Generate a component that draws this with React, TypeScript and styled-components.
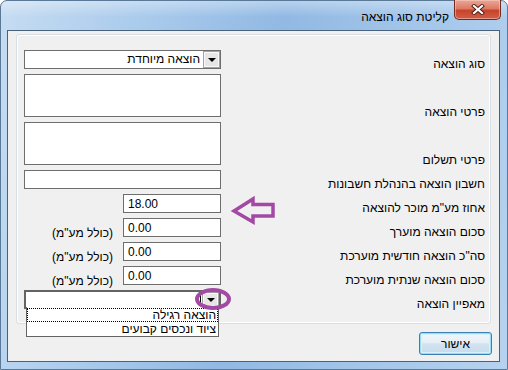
import React from "react";
import styled, { createGlobalStyle } from "styled-components";

const GlobalStyle = createGlobalStyle`
  html, body {
    margin: 0;
    padding: 0;
    background: #ffffff;
  }
  body {
    font-family: "Liberation Sans", "DejaVu Sans", Arial, sans-serif;
  }
`;

const FONT = `"Liberation Sans", "DejaVu Sans", Arial, sans-serif`;

const Window = styled.div`
  position: relative;
  box-sizing: border-box;
  width: 508px;
  height: 370px;
  display: flex;
  flex-direction: column;
  padding: 0 7px 7px 6px;
  border: 1px solid #5a7897;
  border-radius: 7px 7px 0 0;
  background:
    linear-gradient(180deg, rgba(255, 255, 255, 0.35) 0px, rgba(255, 255, 255, 0) 16px),
    linear-gradient(100deg, #c6dcf2 0%, #aacbec 25%, #91b9e3 50%, #a4c6ea 75%, #b6d2ef 100%);
  direction: rtl;
`;

const TitleBar = styled.div`
  height: 29px;
  display: flex;
  flex-direction: row;
  align-items: flex-start;
`;

const CloseButton = styled.div`
  box-sizing: border-box;
  width: 47px;
  height: 20px;
  margin-right: -1px;
  margin-top: -1px;
  display: flex;
  align-items: center;
  justify-content: center;
  border: 1px solid #6f2c22;
  border-top: none;
  border-radius: 0 0 5px 5px;
  background: linear-gradient(180deg, #e9a899 0%, #dd7a63 45%, #c8432b 55%, #d05f45 100%);
  box-shadow: inset 0 0 0 1px rgba(255, 210, 200, 0.5);
`;

const Title = styled.div`
  margin-right: 5px;
  margin-top: 9px;
  font-family: ${FONT};
  font-size: 12px;
  line-height: 14px;
  color: #000;
`;

const Client = styled.div`
  flex: 1;
  box-sizing: border-box;
  display: flex;
  flex-direction: column;
  padding: 3px 8px 6px 8px;
  background: #f0f0f0;
  border: 1px solid #48617c;
`;

const Panel = styled.div`
  position: relative;
  box-sizing: border-box;
  height: 290px;
  padding: 15px 5px 14px 7px;
  border: 1px solid #d5dfe5;
  border-radius: 3px;
  box-shadow: inset 0 0 0 1px #ffffff;
  display: grid;
  grid-template-columns: 1fr 197px;
  grid-template-rows: 19px 43px 43px 19px 19px 19px 19px 19px 19px;
  column-gap: 8px;
  row-gap: 5px;
`;

const Label = styled.div`
  align-self: end;
  margin-bottom: -2px;
  font-family: ${FONT};
  font-size: 12px;
  line-height: 14px;
  color: #000;
  white-space: nowrap;
  text-align: right;
`;

const FieldCell = styled.div`
  position: relative;
  display: flex;
  flex-direction: row;
  align-items: stretch;
`;

const TextBox = styled.input<{ $narrow?: boolean }>`
  box-sizing: border-box;
  width: ${(p) => (p.$narrow ? "98px" : "100%")};
  height: 100%;
  margin: 0;
  padding: 0 4px;
  border: 1px solid #6e6e6e;
  background: #fff;
  font-family: ${FONT};
  font-size: 12px;
  color: #000;
  direction: ltr;
  text-align: left;
  outline: none;
`;

const TextArea = styled.textarea`
  box-sizing: border-box;
  width: 100%;
  height: 100%;
  margin: 0;
  padding: 2px 4px;
  border: 1px solid #6e6e6e;
  background: #fff;
  resize: none;
  outline: none;
  font-family: ${FONT};
  font-size: 12px;
`;

const Suffix = styled.div`
  align-self: end;
  margin-right: 10px;
  margin-bottom: -3px;
  font-family: ${FONT};
  font-size: 12px;
  line-height: 14px;
  color: #000;
  white-space: nowrap;
`;

const Combo = styled.div<{ $focused?: boolean }>`
  position: relative;
  box-sizing: border-box;
  width: 100%;
  height: 100%;
  display: flex;
  flex-direction: row;
  align-items: stretch;
  background: #fff;
  border: ${(p) => (p.$focused ? "2px solid #646464" : "1px solid #6e6e6e")};
`;

const ComboButton = styled.div`
  box-sizing: border-box;
  width: 17px;
  display: flex;
  align-items: center;
  justify-content: center;
  background: #e6e6e6;
  border: 1px solid #a3a3a3;
  box-shadow: inset 0 0 0 1px #f8f8f8;
`;

const Triangle = styled.div`
  width: 0;
  height: 0;
  border-left: 4px solid transparent;
  border-right: 4px solid transparent;
  border-top: 4px solid #000;
`;

const ComboText = styled.div`
  flex: 1;
  padding-right: 3px;
  font-family: ${FONT};
  font-size: 12px;
  line-height: 17px;
  color: #000;
  text-align: right;
  white-space: nowrap;
`;

const Caret = styled.div`
  width: 1px;
  height: 11px;
  align-self: center;
  margin-right: 1px;
  background: #000;
`;

const DropList = styled.div`
  position: absolute;
  top: 100%;
  left: 0;
  right: 0;
  z-index: 2;
  box-sizing: border-box;
  border: 1px solid #646464;
  border-top: none;
  background: #fff;
  padding-top: 1px;
`;

const DropItem = styled.div<{ $focus?: boolean }>`
  box-sizing: border-box;
  height: 14px;
  padding-right: 1px;
  font-family: ${FONT};
  font-size: 12px;
  line-height: 12px;
  color: #000;
  text-align: right;
  white-space: nowrap;
  border: 1px ${(p) => (p.$focus ? "dotted #000" : "solid transparent")};
`;

const ButtonRow = styled.div`
  display: flex;
  flex-direction: row;
  margin-top: 8px;
`;

const OkButton = styled.div`
  box-sizing: border-box;
  width: 73px;
  height: 23px;
  margin-right: -1px;
  display: flex;
  align-items: center;
  justify-content: center;
  border: 1px solid #3c7fb1;
  border-radius: 3px;
  background: linear-gradient(180deg, #f0f6fa 0%, #e6eff6 45%, #d3e3ef 52%, #c6dbeb 100%);
  box-shadow: inset 0 0 0 1px #97dcf8, inset 0 0 0 2px #d4f1fc;
  font-family: ${FONT};
  font-size: 12px;
  color: #000;
`;

const Annotation = styled.svg<{ $left: number; $top: number }>`
  position: absolute;
  left: ${(p) => p.$left}px;
  top: ${(p) => p.$top}px;
  overflow: visible;
  z-index: 3;
`;

const PURPLE = "#a349a4";

const DropButton = () => (
  <ComboButton>
    <Triangle />
  </ComboButton>
);

export default function App() {
  return (
    <>
      <GlobalStyle />
      <Window>
        <TitleBar>
          <CloseButton>
            <svg width="14" height="11" viewBox="0 0 14 11">
              <path d="M3 2 L11 9 M11 2 L3 9" stroke="#4a1c14" strokeWidth="4" strokeLinecap="square" />
              <path d="M3 2 L11 9 M11 2 L3 9" stroke="#ffffff" strokeWidth="2.2" strokeLinecap="square" />
            </svg>
          </CloseButton>
          <Title>קליטת סוג הוצאה</Title>
        </TitleBar>
        <Client>
          <Panel>
            <Label>סוג הוצאה</Label>
            <FieldCell>
              <Combo>
                <DropButton />
                <ComboText>הוצאה מיוחדת</ComboText>
              </Combo>
            </FieldCell>

            <Label>פרטי הוצאה</Label>
            <FieldCell>
              <TextArea readOnly value="" />
            </FieldCell>

            <Label>פרטי תשלום</Label>
            <FieldCell>
              <TextArea readOnly value="" />
            </FieldCell>

            <Label>חשבון הוצאה בהנהלת חשבונות</Label>
            <FieldCell>
              <TextBox readOnly value="" />
            </FieldCell>

            <Label>אחוז מע"מ מוכר להוצאה</Label>
            <FieldCell>
              <TextBox $narrow readOnly value="18.00" />
            </FieldCell>

            <Label>סכום הוצאה מוערך</Label>
            <FieldCell>
              <TextBox $narrow readOnly value="0.00" />
              <Suffix>(כולל מע"מ)</Suffix>
            </FieldCell>

            <Label>סה"כ הוצאה חודשית מוערכת</Label>
            <FieldCell>
              <TextBox $narrow readOnly value="0.00" />
              <Suffix>(כולל מע"מ)</Suffix>
            </FieldCell>

            <Label>סכום הוצאה שנתית מוערכת</Label>
            <FieldCell>
              <TextBox $narrow readOnly value="0.00" />
              <Suffix>(כולל מע"מ)</Suffix>
            </FieldCell>

            <Label>מאפיין הוצאה</Label>
            <FieldCell>
              <Combo $focused>
                <DropButton />
                <Caret />
                <ComboText />
                <DropList>
                  <DropItem $focus>הוצאה רגילה</DropItem>
                  <DropItem>ציוד ונכסים קבועים</DropItem>
                </DropList>
              </Combo>
            </FieldCell>
          </Panel>
          <ButtonRow>
            <OkButton>אישור</OkButton>
          </ButtonRow>
        </Client>

        <Annotation $left={229} $top={194} width="48" height="32" viewBox="0 0 48 32">
          <path
            d="M4 16 L23 4 L23 9.5 L43 9.5 L43 21 L23 21 L23 27 Z"
            fill="none"
            stroke={PURPLE}
            strokeWidth="3.5"
            strokeLinejoin="miter"
          />
        </Annotation>
        <Annotation $left={193} $top={286} width="40" height="26" viewBox="0 0 40 26">
          <ellipse cx="19" cy="12" rx="16" ry="9" fill="none" stroke={PURPLE} strokeWidth="4" />
        </Annotation>
      </Window>
    </>
  );
}
